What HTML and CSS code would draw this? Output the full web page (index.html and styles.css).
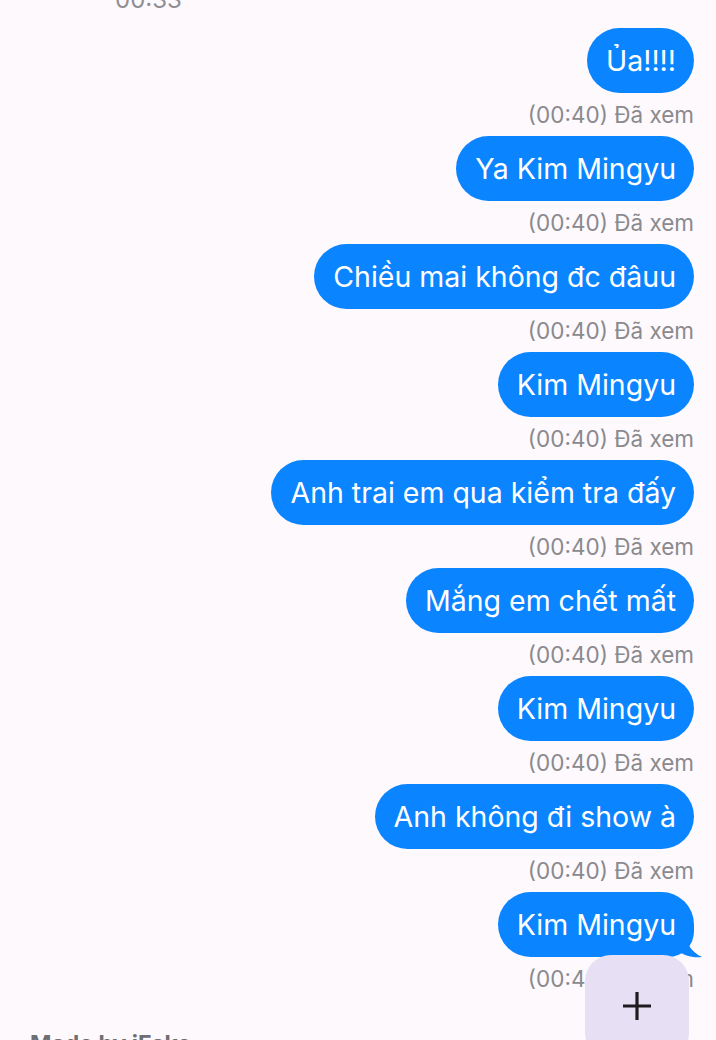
FILE: index.html
```html
<!DOCTYPE html>
<html lang="vi">
<head>
  <meta charset="UTF-8" />
  <meta name="viewport" content="width=device-width, initial-scale=1" />
  <title>Tin nhắn</title>
  <link rel="stylesheet" href="styles.css">
</head>
<body>

<div class="chat">
  <div class="old-time">00:33</div>

  <div class="msg"><div class="bubble">Ủa!!!!</div></div>
  <div class="seen">(00:40) Đã xem</div>

  <div class="msg"><div class="bubble">Ya Kim Mingyu</div></div>
  <div class="seen">(00:40) Đã xem</div>

  <div class="msg"><div class="bubble">Chiều mai không đc đâuu</div></div>
  <div class="seen">(00:40) Đã xem</div>

  <div class="msg"><div class="bubble">Kim Mingyu</div></div>
  <div class="seen">(00:40) Đã xem</div>

  <div class="msg"><div class="bubble">Anh trai em qua kiểm tra đấy</div></div>
  <div class="seen">(00:40) Đã xem</div>

  <div class="msg"><div class="bubble">Mắng em chết mất</div></div>
  <div class="seen">(00:40) Đã xem</div>

  <div class="msg"><div class="bubble">Kim Mingyu</div></div>
  <div class="seen">(00:40) Đã xem</div>

  <div class="msg"><div class="bubble">Anh không đi show à</div></div>
  <div class="seen">(00:40) Đã xem</div>

  <!-- tin cuối có đuôi -->
  <div class="msg">
    <div class="bubble last">
      Kim Mingyu
      <svg class="tail" width="26" height="28" viewBox="0 0 26 28">
        <path d="M0 0 L8 0 C8 12 14 22 25 27 C16 28 7 26 0 20 Z" fill="#0a84ff"/>
      </svg>
    </div>
  </div>
  <div class="seen">(00:40) Đã xem</div>

  <div class="credit">Made by iFake</div>
</div>

<button class="fab" aria-label="Thêm">
  <svg width="32" height="32" viewBox="0 0 32 32">
    <path d="M16 2 V30 M2 16 H30" stroke="#1d1b20" stroke-width="3.2" fill="none"/>
  </svg>
</button>

</body>
</html>
```

FILE: styles.css
```css
body {
  margin: 0;
  background-color: #fdf9fd;
  font-family: "Inter", "Roboto", sans-serif;
  height: 1040px;
  overflow: hidden;
}

.chat {
  display: flex;
  flex-direction: column;
  padding: 0 22px 0 0;
}

.old-time {
  margin-top: -15px;
  padding-left: 115px;
  height: 43px;
  font-size: 24px;
  color: #8e8e93;
}

.msg {
  display: flex;
  justify-content: flex-end;
}

.bubble {
  position: relative;
  height: 65px;
  line-height: 65px;
  padding: 0 18px 0 19px;
  border-radius: 33px;
  background-color: #0a84ff;
  color: #fff;
  font-size: 28.5px;
  white-space: nowrap;
}

.bubble.last {
  border-bottom-right-radius: 26px;
}

.tail {
  position: absolute;
  right: -9px;
  bottom: -1px;
}

.seen {
  height: 43px;
  line-height: 43px;
  text-align: right;
  font-size: 22.5px;
  color: #8a8a8e;
}

.credit {
  margin-top: 30px;
  padding-left: 30px;
  font-size: 23px;
  font-weight: 700;
  color: #6e6e73;
}

.fab {
  position: fixed;
  left: 585px;
  top: 955px;
  width: 104px;
  height: 104px;
  border: none;
  border-radius: 26px;
  background-color: #e7e0f5;
  display: flex;
  align-items: flex-start;
  justify-content: center;
  padding-top: 35px;
  cursor: pointer;
}
```
